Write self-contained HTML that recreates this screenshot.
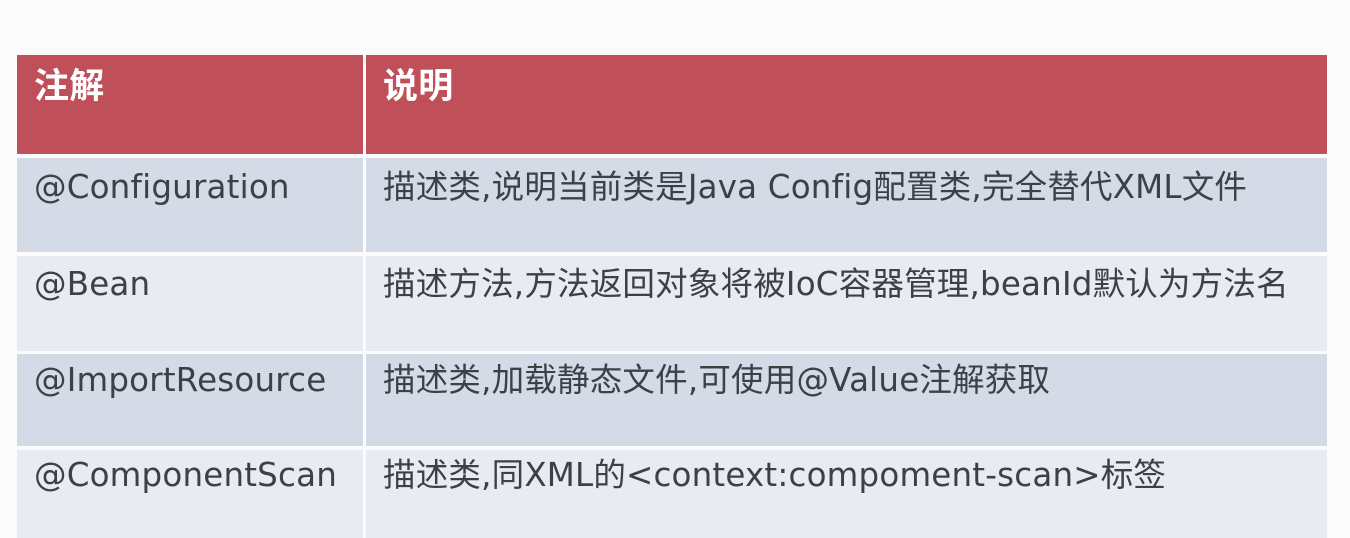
<!DOCTYPE html>
<html><head><meta charset="utf-8"><style>
body{margin:0;width:1350px;height:538px;background:#fbfbfb;overflow:hidden;position:relative;font-family:"DejaVu Sans","Noto Sans CJK SC",sans-serif}
.c{position:absolute;box-sizing:border-box;padding-left:17px;color:#3b4049;font-size:32.5px;line-height:1;white-space:nowrap;letter-spacing:0.2px}
.h{background:#bf4f59;color:#fff;font-weight:bold;font-size:35px;font-family:"Noto Sans CJK SC",sans-serif}
.o{background:#d4dae6}.e{background:#e8ebf2}
</style></head><body>
<div class="c h" style="left:17px;top:55px;width:346px;height:99px;padding-top:11px">注解</div>
<div class="c h" style="left:366px;top:55px;width:961px;height:99px;padding-top:11px">说明</div>

<div class="c o" style="left:17px;top:158px;width:346px;height:94px;padding-top:13px">@Configuration</div>
<div class="c o" style="left:366px;top:158px;width:961px;height:94px;padding-top:13px">描述类,说明当前类是Java Config配置类,完全替代XML文件</div>

<div class="c e" style="left:17px;top:256px;width:346px;height:95px;padding-top:12px">@Bean</div>
<div class="c e" style="left:366px;top:256px;width:961px;height:95px;padding-top:12px">描述方法,方法返回对象将被IoC容器管理,beanId默认为方法名</div>

<div class="c o" style="left:17px;top:354px;width:346px;height:92px;padding-top:10px">@ImportResource</div>
<div class="c o" style="left:366px;top:354px;width:961px;height:92px;padding-top:10px">描述类,加载静态文件,可使用@Value注解获取</div>

<div class="c e" style="left:17px;top:450px;width:346px;height:88px;padding-top:9px">@ComponentScan</div>
<div class="c e" style="left:366px;top:450px;width:961px;height:88px;padding-top:9px">描述类,同XML的&lt;context:compoment-scan&gt;标签</div>
</body></html>
